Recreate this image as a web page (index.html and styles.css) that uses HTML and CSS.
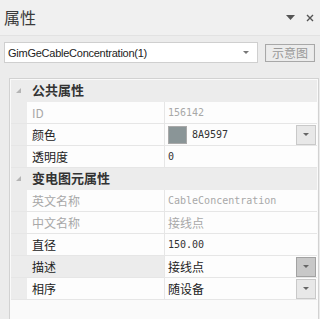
FILE: index.html
```html
<!DOCTYPE html>
<html lang="zh-CN">
<head>
  <meta charset="UTF-8" />
  <title>属性</title>
  <link rel="stylesheet" href="styles.css">
</head>
<body>
  <div class="panel">
    <div class="title-bar">
      <span class="title">属性</span>
      <span class="title-tools">
        <svg class="tool" width="9" height="6" viewBox="0 0 9 6"><polygon points="0,0 9,0 4.5,5" fill="#555"/></svg>
        <svg class="tool" width="8" height="8" viewBox="0 0 8 8"><path d="M1 1 L7 7 M7 1 L1 7" stroke="#555" stroke-width="1.4"/></svg>
      </span>
    </div>

    <div class="content">
      <div class="toolbar">
        <div class="combo">
          <span>GimGeCableConcentration(1)</span>
          <svg width="6" height="4" viewBox="0 0 6 4"><polygon points="0,0 6,0 3,3" fill="#777"/></svg>
        </div>
        <div class="btn">示意图</div>
      </div>

      <div class="grid">
        <div class="row cat">
          <div class="gutter"><svg width="6" height="6" viewBox="0 0 6 6"><polygon points="5,0 5,5 0,5" fill="#b5b5b5"/></svg></div>
          <div class="cat-name">公共属性</div>
        </div>
        <div class="row">
          <div class="gutter"></div>
          <div class="name dim">ID</div>
          <div class="value dim mono">156142</div>
        </div>
        <div class="row">
          <div class="gutter"></div>
          <div class="name">颜色</div>
          <div class="value">
            <span class="swatch" style="background:#8A9597"></span>
            <span class="mono">8A9597</span>
            <span class="drop"><svg width="6" height="4" viewBox="0 0 6 4"><polygon points="0,0 6,0 3,3" fill="#666"/></svg></span>
          </div>
        </div>
        <div class="row">
          <div class="gutter"></div>
          <div class="name">透明度</div>
          <div class="value mono">0</div>
        </div>

        <div class="row cat">
          <div class="gutter"><svg width="6" height="6" viewBox="0 0 6 6"><polygon points="5,0 5,5 0,5" fill="#b5b5b5"/></svg></div>
          <div class="cat-name">变电图元属性</div>
        </div>
        <div class="row">
          <div class="gutter"></div>
          <div class="name dim">英文名称</div>
          <div class="value dim mono">CableConcentration</div>
        </div>
        <div class="row">
          <div class="gutter"></div>
          <div class="name dim">中文名称</div>
          <div class="value dim">接线点</div>
        </div>
        <div class="row">
          <div class="gutter"></div>
          <div class="name">直径</div>
          <div class="value mono">150.00</div>
        </div>
        <div class="row selected">
          <div class="gutter"></div>
          <div class="name">描述</div>
          <div class="value">
            <span>接线点</span>
            <span class="drop active"><svg width="6" height="4" viewBox="0 0 6 4"><polygon points="0,0 6,0 3,3" fill="#666"/></svg></span>
          </div>
        </div>
        <div class="row">
          <div class="gutter"></div>
          <div class="name">相序</div>
          <div class="value">
            <span>随设备</span>
            <span class="drop"><svg width="6" height="4" viewBox="0 0 6 4"><polygon points="0,0 6,0 3,3" fill="#666"/></svg></span>
          </div>
        </div>
        <div class="empty"></div>
      </div>
    </div>
  </div>
</body>
</html>
```

FILE: styles.css
```css
html, body { margin: 0; padding: 0; }
body {
  width: 320px;
  height: 319px;
  overflow: hidden;
  background: #ececec;
  font-family: "Noto Sans CJK SC", "Liberation Sans", sans-serif;
  font-size: 12px;
  color: #222;
}
.panel { height: 319px; display: flex; flex-direction: column; }

.title-bar {
  height: 35px;
  background: #f0f0f0;
  border-bottom: 1px solid #e2e2e2;
  display: flex;
  align-items: center;
  justify-content: space-between;
  padding: 0 6px 0 4px;
}
.title { font-size: 16px; color: #3a3a3a; line-height: 20px; margin-top: -2px; }
.title-tools { display: flex; align-items: center; gap: 11px; }
.tool { display: block; }

.content { flex: 1; display: flex; flex-direction: column; background: #ececec; }

.toolbar {
  display: flex;
  align-items: center;
  padding: 6px 0 0 4px;
  gap: 7px;
}
.combo {
  width: 241px;
  height: 19px;
  background: #fff;
  border: 1px solid #cfcfcf;
  display: flex;
  align-items: center;
  justify-content: space-between;
  padding: 0 8px 0 3px;
  font-family: "Liberation Sans", sans-serif;
  font-size: 11px;
  letter-spacing: -0.25px;
  color: #222;
}
.btn {
  width: 48px;
  height: 16px;
  border: 1px solid #a8a8a8;
  box-shadow: inset 1px 0 0 #e8e8e8, inset -1px 0 0 #e8e8e8;
  color: #999;
  font-size: 12px;
  line-height: 16px;
  text-align: center;
  margin-top: 1px;
}

.grid {
  margin: 15px 1px 0 9px;
  flex: 1;
  border: 1px solid #d2d2d2;
  border-bottom: none;
  padding: 1px 1px 0 1px;
  background: #fafafa;
  display: flex;
  flex-direction: column;
}
.row {
  display: flex;
  height: 21px;
  border-bottom: 1px solid #e6e6e6;
  background: #fdfdfd;
}
.gutter {
  width: 16px;
  flex: none;
  background: #ececec;
  display: flex;
  align-items: center;
  justify-content: center;
}
.row.cat { background: #ececec; border-bottom-color: #ececec; }
.cat-name { font-weight: bold; font-size: 13px; line-height: 20px; padding-left: 5px; color: #333; }
.row.cat .gutter svg { margin-top: 1px; }

.name {
  width: 132px;
  flex: none;
  padding-left: 5px;
  line-height: 21px;
  border-right: 1px solid #e6e6e6;
}
.row.selected .name { background: #ececec; }
.value {
  flex: 1;
  display: flex;
  align-items: center;
  padding-left: 3px;
  line-height: 21px;
  gap: 5px;
}
.mono { font-family: "DejaVu Sans Mono", "Liberation Mono", monospace; font-size: 10px; color: #333; }
.dim { color: #a8a8a8; }
.dim.mono { color: #a8a8a8; }

.swatch {
  width: 19px;
  height: 18px;
  border: 1px solid #a9a9a9;
  box-sizing: border-box;
  flex: none;
}
.drop {
  margin-left: auto;
  width: 18px;
  height: 18px;
  background: #e8e8e8;
  border: 1px solid #c9c9c9;
  display: flex;
  align-items: center;
  justify-content: center;
  margin-right: 1px;
}
.drop.active { background: #c8c8c8; border-color: #a2a2a2; }
.empty { flex: 1; background: #fafafa; }
```
